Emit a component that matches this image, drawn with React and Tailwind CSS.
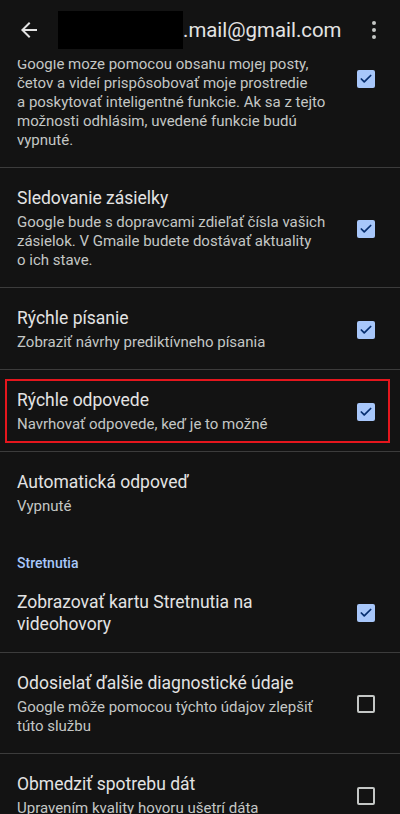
import { Check } from "lucide-react";

// line breaks follow the reference wrapping
const items = [
  {
    title: "Inteligentné funkcie a prispôsobenie v Gmaile, Chate a Meete",
    desc: "Google môže pomocou obsahu mojej pošty,\nčetov a videí prispôsobovať moje prostredie\na poskytovať inteligentné funkcie. Ak sa z tejto\nmožnosti odhlásim, uvedené funkcie budú\nvypnuté.",
    checked: true,
  },
  {
    title: "Sledovanie zásielky",
    desc: "Google bude s dopravcami zdieľať čísla vašich\nzásielok. V Gmaile budete dostávať aktuality\no ich stave.",
    checked: true,
  },
  {
    title: "Rýchle písanie",
    desc: "Zobraziť návrhy prediktívneho písania",
    checked: true,
  },
  {
    title: "Rýchle odpovede",
    desc: "Navrhovať odpovede, keď je to možné",
    checked: true,
    marked: true,
  },
];

function Checkbox({ checked }) {
  if (checked) {
    return (
      <div className="w-[18px] h-[18px] rounded-[2px] bg-[#a8c7fa] flex items-center justify-center shrink-0">
        <Check size={14} strokeWidth={3} className="text-[#062e6f]" />
      </div>
    );
  }
  return (
    <div className="w-[18px] h-[18px] rounded-[2px] border-2 border-[#c4c7c5] shrink-0" />
  );
}

function Item({ title, desc, checked, marked, divider = true, className = "pt-[19px]" }) {
  return (
    <div className={divider ? "border-b border-[#3c3c3c]" : ""}>
      <div className={`relative flex items-center pl-[17px] pr-[25px] pb-[17px] ${className}`}>
        <div className="flex-1 min-w-0 pr-[24px]">
          <div className="text-[17.5px] leading-[22px] text-[#e3e3e3]">{title}</div>
          {desc && (
            <div className="mt-[4px] text-[15px] leading-[19px] text-[#c4c7c5] whitespace-pre-line">
              {desc}
            </div>
          )}
        </div>
        {checked !== undefined && <Checkbox checked={checked} />}
        {marked && (
          <div className="absolute left-[5px] right-[10px] top-[9px] bottom-[8px] border-2 border-[#e5161d]" />
        )}
      </div>
    </div>
  );
}

export default function App() {
  return (
    <div
      className="h-[814px] w-[400px] bg-[#131313] flex flex-col overflow-hidden"
      style={{ fontFamily: "Roboto, 'Noto Sans', sans-serif" }}
    >
      <header className="h-[60px] shrink-0 flex items-center pl-[17px] pr-[14px]">
        <svg width="24" height="24" viewBox="0 0 24 24" className="text-[#e3e3e3] shrink-0">
          <path fill="currentColor" d="M20 11H7.83l5.59-5.59L12 4l-8 8 8 8 1.41-1.41L7.83 13H20v-2z" />
        </svg>
        <div className="flex items-center ml-[17px] flex-1">
          <div className="w-[125px] h-[38px] bg-black" />
          <span className="text-[20.4px] text-[#e3e3e3]">.mail@gmail.com</span>
        </div>
        <svg width="24" height="24" viewBox="0 0 24 24" className="text-[#c4c7c5] shrink-0">
          <circle cx="12" cy="5" r="2" fill="currentColor" />
          <circle cx="12" cy="12" r="2" fill="currentColor" />
          <circle cx="12" cy="19" r="2" fill="currentColor" />
        </svg>
      </header>
      <main className="flex-1 overflow-hidden">
        <div className="-mt-[72px]">
          {items.map((it) => (
            <Item key={it.title} {...it} />
          ))}
          <Item title="Automatická odpoveď" desc="Vypnuté" divider={false} />
          <div className="pl-[17px] pt-[20px] text-[14px] leading-[20px] font-medium text-[#a8c7fa]">
            Stretnutia
          </div>
          <Item
            title="Zobrazovať kartu Stretnutia na videohovory"
            checked={true}
            className="pt-[18px]"
          />
          <Item
            title="Odosielať ďalšie diagnostické údaje"
            desc="Google môže pomocou týchto údajov zlepšiť túto službu"
            checked={false}
          />
          <Item
            title="Obmedziť spotrebu dát"
            desc="Upravením kvality hovoru ušetrí dáta"
            checked={false}
          />
        </div>
      </main>
    </div>
  );
}
